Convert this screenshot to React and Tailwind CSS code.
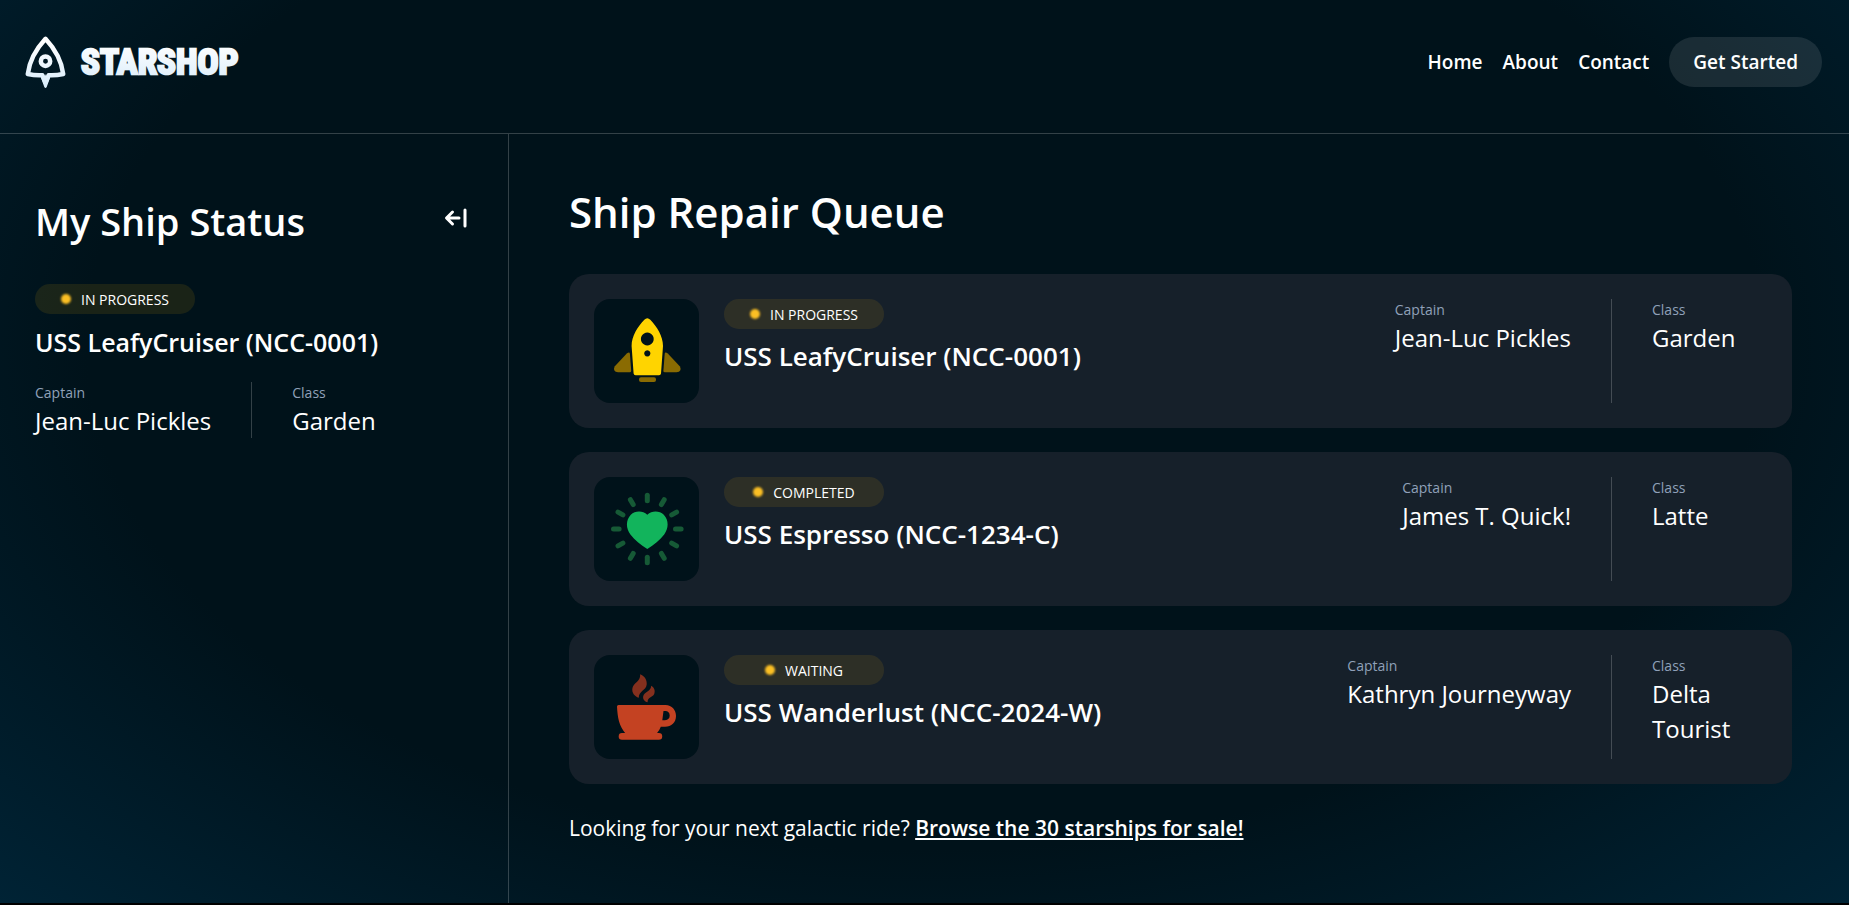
import React from "react";

function Logo() {
  return (
    <a href="#" aria-label="Starshop" className="flex items-center">
      <svg width="220" height="52" viewBox="0 0 220 52" aria-hidden="true">
        <defs>
          <linearGradient id="fade" gradientUnits="userSpaceOnUse" x1="0" y1="6" x2="0" y2="50">
            <stop offset="0" stopColor="#ffffff" />
            <stop offset="1" stopColor="#d9ecfa" />
          </linearGradient>
        </defs>
        <g fill="none" stroke="url(#fade)" strokeWidth="4.500" strokeLinejoin="round">
          <path d="M21.500 2.800 C13 12 5.500 24 3.800 38 Q11 39.600 18.300 39.200 L21.500 46.500 L24.700 39.200 Q32 39.600 39.200 38 C37.500 24 30 12 21.500 2.800 Z" />
          <circle cx="21.500" cy="25.200" r="4.700" />
        </g>
        <path fill="url(#fade)" d="M16.500 40.500 L20.300 51 Q21.500 53 22.700 51 L26.500 40.500 L22.500 42 L21.500 38 L20.500 42 Z" />
        <text
          x="57"
          y="38"
          fill="url(#fade)"
          stroke="url(#fade)"
          strokeWidth="2.500"
          className="font-['Liberation_Sans_Narrow','Roboto_Condensed','DejaVu_Sans_Condensed',sans-serif] text-[35px] font-bold"
        >
          STARSHOP
        </text>
      </svg>
    </a>
  );
}

function RocketIcon() {
  return (
    <svg viewBox="0 0 105 104" className="size-full" aria-hidden="true">
      <path
        fill="#ffd400"
        fillRule="evenodd"
        d="M50.300 20.800 Q53.300 17.800 56.300 20.800 C63 28 69 37 69 47 L67 74.500 Q66.800 76.300 65 76.300 H41.600 Q39.800 76.300 39.600 74.500 L37.600 47 C37.600 37 43.600 28 50.300 20.800 Z M53.300 33.600 a6.400 6.400 0 1 0 0.010 0 Z M53.300 51.300 a3.100 3.100 0 1 0 0.010 0 Z"
      />
      <g fill="#8a6b02">
        <path d="M35.900 54.800 L37.200 71.800 Q37.300 73.300 35.800 73.300 H24 Q18.500 72.600 20.600 67.500 L32.800 54.600 Q35.600 52.400 35.900 54.800 Z" />
        <path d="M70.700 54.800 L69.400 71.800 Q69.300 73.300 70.800 73.300 H82.600 Q88.100 72.600 86 67.500 L73.800 54.600 Q71 52.400 70.700 54.800 Z" />
        <rect x="45" y="78.300" width="17" height="4.700" rx="2" />
      </g>
    </svg>
  );
}

const rays = [0, 30, 60, 90, 120, 150, 180, 210, 240, 270, 300, 330];

function HeartIcon() {
  return (
    <svg viewBox="0 0 105 104" className="size-full" aria-hidden="true">
      <path
        fill="#12b45c"
        d="M53.300 37.800 C58 33.300 65.500 33.600 69.800 37.800 C75 43.200 74.700 51.500 70.200 57.500 C66 63 60 68 53.300 72 C46.600 68 40.600 63 36.400 57.500 C31.900 51.500 31.600 43.200 36.800 37.800 C41.100 33.600 48.600 33.300 53.300 37.800 Z"
      />
      <g stroke="#165a36" strokeWidth="5" strokeLinecap="round">
        {rays.map((deg) => (
          <path key={deg} d="M53.300 18.200 V23.800" transform={`rotate(${deg} 53.300 52)`} />
        ))}
      </g>
    </svg>
  );
}

function CoffeeIcon() {
  return (
    <svg viewBox="0 0 105 104" className="size-full" aria-hidden="true">
      <g fill="#c44222">
        <path
          fillRule="evenodd"
          d="M24.500 50 H71.500 C78 50 82 55 82 61 C82 67.500 77.500 71.700 71 71.700 H66.800 Q65.500 75.500 62.700 78.500 H31.500 C25 71 23.500 62 23 51.500 Q23 50 24.500 50 Z M69.500 56 L68.300 65.200 H71 Q75.700 65 75.700 60.600 Q75.500 56 71.300 56 Z"
        />
        <rect x="24.700" y="78" width="43.500" height="6.700" rx="3.300" />
      </g>
      <g fill="#84301e">
        <path d="M46.200 19.200 C50.500 20.800 53.200 25 52.700 29.500 C52.200 35.500 44.500 36 44.800 42.700 C40.500 41.500 37.600 37.500 38.400 33.200 C39.300 27.800 46.800 26.500 46.200 19.200 Z" />
        <path d="M57.200 30.800 C60.300 32.500 61.500 36 60.200 39 C58.500 42.500 53.500 42.300 53.600 47.200 C50.500 46.500 48.600 44 49.200 41.200 C50.200 37 57 36.500 57.200 30.800 Z" />
      </g>
    </svg>
  );
}

function CollapseIcon() {
  return (
    <svg width="24" height="20" viewBox="0 0 24 20" fill="none" stroke="currentColor" strokeWidth="3" strokeLinecap="round" strokeLinejoin="round" aria-hidden="true">
      <path d="M15 10 H3 M8.500 4 L2.500 10 L8.500 16 M21 2 V18" />
    </svg>
  );
}

const ships = [
  { name: "USS LeafyCruiser (NCC-0001)", status: "IN PROGRESS", captain: "Jean-Luc Pickles", type: "Garden", Icon: RocketIcon },
  { name: "USS Espresso (NCC-1234-C)", status: "COMPLETED", captain: "James T. Quick!", type: "Latte", Icon: HeartIcon },
  { name: "USS Wanderlust (NCC-2024-W)", status: "WAITING", captain: "Kathryn Journeyway", type: "Delta Tourist", Icon: CoffeeIcon },
];

function Badge({ children }) {
  return (
    <p className="flex h-[30px] w-40 items-center justify-center gap-2.5 rounded-full bg-amber-400/10 text-[14px]">
      <span className="size-2.5 rounded-full bg-[#fbbf24] blur-[1px]" />
      {children}
    </p>
  );
}

function Fact({ label, value, className }) {
  return (
    <div className={className}>
      <dt className="text-[14px] leading-[21px] text-slate-400">{label}</dt>
      <dd className="text-[24px] leading-[35px]">{value}</dd>
    </div>
  );
}

export default function App() {
  return (
    <div className="flex min-h-screen flex-col border-b-2 border-black bg-[#00121a] bg-[radial-gradient(ellipse_farthest-corner_at_50%_38%,#00121a_64%,#002335_100%)] font-['Open_Sans','Noto_Sans',sans-serif] text-white">
      <header className="flex items-center justify-between border-b border-white/20 pt-9 pr-[27px] pb-[45px] pl-6">
        <Logo />
        <nav className="flex items-center gap-5 text-[19px] leading-[26px] font-semibold">
          <a href="#">Home</a>
          <a href="#">About</a>
          <a href="#">Contact</a>
          <a href="#" className="rounded-full bg-white/10 px-6 py-3">Get Started</a>
        </nav>
      </header>
      <div className="flex grow">
        <aside className="w-[509px] shrink-0 border-r border-white/20 px-[35px] pt-16">
          <div className="mb-10 flex items-start justify-between">
            <h2 className="text-[38px] leading-[46px] font-semibold">My Ship Status</h2>
            <button type="button" aria-label="Collapse sidebar" className="flex h-10 w-[34px] items-center justify-center">
              <CollapseIcon />
            </button>
          </div>
          <Badge>IN PROGRESS</Badge>
          <h3 className="mt-2 mb-5 text-[25px] leading-10 font-semibold">USS LeafyCruiser (NCC-0001)</h3>
          <dl className="flex">
            <Fact label="Captain" value="Jean-Luc Pickles" className="mr-10 border-r border-white/20 pr-10" />
            <Fact label="Class" value="Garden" />
          </dl>
        </aside>
        <main className="min-w-0 grow pt-12 pr-[57px] pb-12 pl-[60px]">
          <h1 className="mb-8 text-[42px] leading-[60px] font-semibold">Ship Repair Queue</h1>
          <div className="flex flex-col gap-6">
            {ships.map(({ name, status, captain, type, Icon }) => (
              <article key={name} className="flex gap-[25px] rounded-[20px] bg-[#16202a] p-[25px]">
                <div className="h-[104px] w-[105px] shrink-0 rounded-2xl bg-[#00121a]">
                  <Icon />
                </div>
                <div className="grow">
                  <Badge>{status}</Badge>
                  <h3 className="mt-2 text-[26px] leading-[38px] font-semibold">{name}</h3>
                </div>
                <dl className="flex shrink-0">
                  <Fact label="Captain" value={captain} className="mr-10 border-r border-white/20 pr-10" />
                  <Fact label="Class" value={type} className="w-[115px]" />
                </dl>
              </article>
            ))}
          </div>
          <p className="mt-7 text-[21px] leading-8">
            Looking for your next galactic ride?{" "}
            <a href="#" className="font-semibold underline decoration-2 underline-offset-2">Browse the 30 starships for sale!</a>
          </p>
        </main>
      </div>
    </div>
  );
}
